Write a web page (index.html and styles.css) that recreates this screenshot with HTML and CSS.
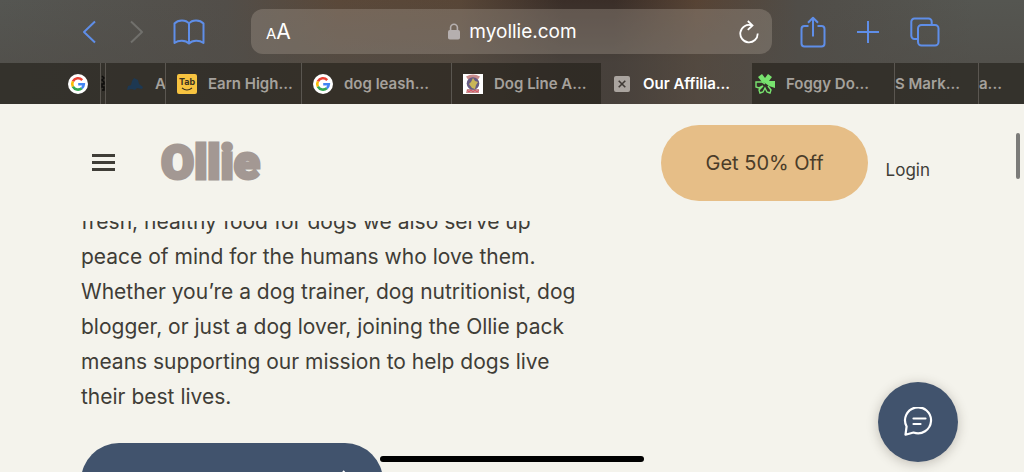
FILE: index.html
```html
<!DOCTYPE html>
<html lang="en">
<head>
<meta charset="utf-8">
<meta name="viewport" content="width=device-width, initial-scale=1">
<title>myollie.com</title>
<link rel="stylesheet" href="styles.css">
</head>
<body>
<svg class="defs" width="0" height="0" aria-hidden="true">
  <symbol id="google" viewBox="0 0 20 20">
    <circle cx="10" cy="10" r="10" fill="#fff"/>
    <g fill="none" stroke-width="2.6">
      <path d="M14.2 6.1A5.8 5.8 0 0 0 4.9 7.3" stroke="#ea4335"/>
      <path d="M4.9 7.3a5.8 5.8 0 0 0 0 5.4" stroke="#fbbc05"/>
      <path d="M4.9 12.7a5.8 5.8 0 0 0 8.9 1.5" stroke="#34a853"/>
      <path d="M13.8 14.2a5.6 5.6 0 0 0 2-4H10.2" stroke="#4285f4"/>
    </g>
  </symbol>
</svg>

<div class="browser">
  <div class="toolbar">
    <div class="tools tools-left">
      <button class="tool" aria-label="Back"><svg width="14" height="24" viewBox="0 0 14 24"><path d="M13 1.500 2 12l11 10.500"/></svg></button>
      <button class="tool tool-off" aria-label="Forward"><svg width="14" height="24" viewBox="0 0 14 24"><path d="m1 1.500 11 10.500L1 22.500"/></svg></button>
      <button class="tool" aria-label="Bookmarks"><svg width="32" height="26" viewBox="0 0 32 26"><path d="M16 4.500C13 .5 5 .5 1.500 4.500V24c4-3 11-3 14.500.5 3.500-3.500 10.500-3.500 14.500-.5V4.500C27 .5 19 .5 16 4.500v20"/></svg></button>
    </div>
    <div class="address">
      <button class="text-size" aria-label="Text size"><span class="small-a">A</span>A</button>
      <div class="site">
        <svg width="12" height="17" viewBox="0 0 12 17"><rect y="7" width="12" height="9.500" rx="1.800" fill="#b5afaf"/><path d="M2.600 8V4.600a3.400 3.400 0 0 1 6.800 0V8" fill="none" stroke="#b5afaf" stroke-width="1.600"/></svg>
        <span>myollie.com</span>
      </div>
      <button class="reload" aria-label="Reload"><svg width="20" height="24" viewBox="0 0 20 24"><path d="M12.500 5.300A8.700 8.700 0 1 0 18.700 13.500M8.800 1l4.700 4.400-4.700 4.500"/></svg></button>
    </div>
    <div class="tools tools-right">
      <button class="tool" aria-label="Share"><svg width="26" height="32" viewBox="0 0 26 32"><path d="M8.500 10H4.500A3 3 0 0 0 1.500 13v14.500a3 3 0 0 0 3 3h17a3 3 0 0 0 3-3V13a3 3 0 0 0-3-3h-4M13 20.500V2M8 6.800l5-5 5 5"/></svg></button>
      <button class="tool" aria-label="New tab"><svg width="22" height="22" viewBox="0 0 22 22"><path d="M11 0v22M0 11h22"/></svg></button>
      <button class="tool" aria-label="Tabs"><svg width="30" height="30" viewBox="0 0 30 30"><rect x="8" y="8" width="20.500" height="20.500" rx="3.500"/><path d="M8 22H4.500a3.200 3.200 0 0 1-3.200-3.200v-14A3.200 3.200 0 0 1 4.500 1.500h14a3.200 3.200 0 0 1 3.200 3.200V8"/></svg></button>
    </div>
  </div>

  <nav class="tabs" aria-label="Open tabs">
    <button class="tab tab-first" aria-label="Google"><svg class="favicon"><use href="#google"/></svg></button>
    <button class="tab tab-sliver" aria-label="Tab"><svg width="4" height="17" viewBox="0 0 4 17"><path d="M1 1l2 2-2 2 2 2v2H1v3h2v3H1" fill="none" stroke="#0c0b0a" stroke-width="1.500"/></svg></button>
    <button class="tab tab-cut"><svg width="18" height="16" viewBox="0 0 18 16"><path d="M8 2l4 2 1 4 4 3-1 2-5-1-2 2-3-1-5 1 1-4 3-1 1-4z" fill="#1d3852"/></svg><span>A</span></button>
    <button class="tab"><svg class="favicon favicon-tab" viewBox="0 0 20 20"><rect width="20" height="20" rx="2" fill="#f7c340"/><text x="10" y="11">Tab</text><path d="M5 14q5 4 10 0" fill="none" stroke="#3b3220" stroke-width="1.200"/></svg><span>Earn High...</span></button>
    <button class="tab"><svg class="favicon"><use href="#google"/></svg><span>dog leash...</span></button>
    <button class="tab"><svg class="favicon" viewBox="0 0 20 20"><rect width="20" height="20" fill="#fff"/><path d="M3 2.500q7-4 14 0l-2 3H5zM4 15h12v4H3z" fill="#c98c8c"/><circle cx="10" cy="9.500" r="6.300" fill="#665b82"/><path d="m10 4 2 3 3 1-2 3-1 4-3-1-3-4 2-2z" fill="#c9b657"/><path d="M4 16l2 2 2-2 2 2 2-2 2 2 2-2" fill="none" stroke="#d95768"/></svg><span>Dog Line A...</span></button>
    <button class="tab tab-active" aria-current="page"><svg width="16" height="16" viewBox="0 0 16 16"><rect width="16" height="16" rx="2" fill="#aaa49f"/><path d="m4.700 4.700 6.600 6.600M11.300 4.700l-6.600 6.600" stroke="#403a36" stroke-width="1.600"/></svg><span>Our Affilia...</span></button>
    <button class="tab tab-near"><svg class="favicon" viewBox="0 0 20 20"><path d="M3 3l4-3 3 4 3-4 4 3-3 4h6v7l-6-2-4-3-3-1z" fill="#78e36f"/><path d="M10 10 7 8H1v5l3 1 4-2-4 4 1 3 3-1 2-4 2 4 3 1 1-3-3-4" fill="none" stroke="#78e36f" stroke-width="1.400"/></svg><span>Foggy Do...</span></button>
    <button class="tab tab-flush"><span>S Mark...</span></button>
    <button class="tab tab-end"><span>a...</span></button>
  </nav>
</div>

<div class="page">
  <header class="site-header">
    <button class="menu" aria-label="Menu"><span></span><span></span><span></span></button>
    <a class="logo" href="#">Ollie</a>
    <a class="offer" href="#">Get 50% Off</a>
    <a class="login" href="#">Login</a>
  </header>
  <main class="content">
    <p class="intro">fresh, healthy food for dogs we also serve up<br>peace of mind for the humans who love them.<br>Whether you’re a dog trainer, dog nutritionist, dog<br>blogger, or just a dog lover, joining the Ollie pack<br>means supporting our mission to help dogs live<br>their best lives.</p>
    <a class="cta" href="#" aria-label="Next"><svg width="24" height="24" viewBox="0 0 24 24"><path d="m12 2 9 10-9 10M21 12H2"/></svg></a>
  </main>
</div>

<div class="scroll-mark"></div>
<button class="chat" aria-label="Chat"><svg width="30" height="30" viewBox="0 0 30 30"><path d="M3.600 19.500A13 13 0 1 1 10.500 25.500L2.500 27.700z"/><path d="M10.500 11.500h12M10.500 17h7" stroke-linecap="round"/></svg></button>
<div class="home-bar"></div>
</body>
</html>
```
FILE: styles.css
```css
* { box-sizing: border-box; }

body {
  display: flex;
  flex-direction: column;
  height: 100vh;
  margin: 0;
  overflow: hidden;
  background: #f4f3ec;
  color: #3f3d37;
  font-family: Inter, "Liberation Sans", sans-serif;
}

button {
  margin: 0;
  padding: 0;
  border: 0;
  background: none;
  color: inherit;
  font: inherit;
}

a { color: inherit; text-decoration: none; }
svg { flex: none; display: block; }
.defs { position: absolute; }

.browser {
  flex: none;
  background:
    linear-gradient(transparent, rgba(80, 77, 72, 0.6) 62px),
    linear-gradient(90deg, #555652 0%, #524e49 22%, #5a4839 33%, #584637 45%, #3a2e28 55%, #3a2e28 60%, #574334 68%, #504d48 78%, #555651 95%);
}

.toolbar {
  display: grid;
  grid-template-columns: 251fr 521fr 252fr;
  align-items: center;
  height: 63px;
}

.tools { display: flex; align-items: center; }
.tools-left { gap: 34px; padding-left: 82px; }
.tools-right { gap: 31px; padding-left: 28px; }
.tools-left .tool:last-child { margin-left: -5px; }

.tool svg { fill: none; stroke: #5f8ee8; stroke-width: 2; stroke-linejoin: round; }
.tool-off svg { stroke: #71706c; }

.address {
  display: grid;
  grid-template-columns: 1fr auto 1fr;
  align-items: center;
  height: 45px;
  padding: 0 13px 0 15px;
  border-radius: 12px;
  background: rgba(165, 155, 145, 0.36);
  color: #fff;
  font-size: 19px;
}

.text-size { justify-self: start; font-size: 21px; }
.small-a { font-size: 15px; }
.site { display: flex; align-items: center; gap: 9px; }
.reload { justify-self: end; }
.reload svg { fill: none; stroke: #fff; stroke-width: 1.8; }

.tabs {
  display: grid;
  grid-template-columns: 100fr 5fr 60fr 136fr 150fr 150fr 151fr 142fr 84fr 46fr;
  height: 41px;
}

.tab {
  display: flex;
  align-items: center;
  gap: 11px;
  min-width: 0;
  padding-left: 11px;
  overflow: hidden;
  border-left: 1px solid #5a5650;
  background: rgba(34, 30, 24, 0.6);
  color: #a5a19c;
  font-size: 15px;
  font-weight: 600;
  white-space: nowrap;
}

.favicon { width: 20px; height: 20px; }
.favicon-tab text { fill: #3b3220; font-size: 9px; font-weight: 700; text-anchor: middle; }
.tab-first { justify-content: flex-end; padding-right: 12px; border: 0; }
.tab-sliver { padding: 0; }
.tab-cut { padding-left: 20px; }
.tab-active { padding-left: 13px; gap: 13px; border: 0; background: none; color: #fff; }
.tab-near { padding-left: 3px; border: 0; }
.tab-flush { padding: 0; }
.tab-end { padding: 0; }

.page {
  flex: 1;
  min-height: 0;
  overflow: hidden;
}

.site-header {
  display: flex;
  align-items: center;
  height: 117px;
  padding: 0 94px 0 92px;
}

.menu { display: grid; gap: 4px; width: 23px; }
.menu span { height: 3px; background: #3f3d37; }

.logo {
  margin-left: 46px;
  color: #a39893;
  font: 900 48px/60px Roboto, sans-serif;
  -webkit-text-stroke: 3px #a39893;
}

.offer {
  margin-left: auto;
  padding: 24px 44px;
  border-radius: 38px;
  background: #e6be87;
  color: #4a3c29;
  font-size: 20px;
  line-height: 28px;
}

.login { margin: 14px 0 0 18px; font-size: 17px; line-height: 24px; }

.content { overflow: hidden; padding: 0 81px; }

.intro {
  margin: -17px 0 29px;
  font-size: 21px;
  line-height: 35px;
}

.cta {
  display: flex;
  align-items: center;
  justify-content: flex-end;
  width: 302px;
  height: 76px;
  padding-right: 28px;
  border-radius: 38px;
  background: #41536d;
}

.cta svg { fill: none; stroke: #fff; stroke-width: 2; }

.scroll-mark {
  position: fixed;
  top: 133px;
  right: 4px;
  width: 4px;
  height: 46px;
  border-radius: 2px;
  background: #7b7b79;
}

.chat {
  position: fixed;
  right: 66px;
  bottom: 10px;
  display: grid;
  place-items: center;
  width: 80px;
  height: 80px;
  border-radius: 50%;
  background: #41536d;
  box-shadow: 0 2px 12px rgba(60, 50, 40, 0.28);
}

.chat svg { fill: none; stroke: #fff; stroke-width: 2.2; stroke-linejoin: round; }

.home-bar {
  position: fixed;
  bottom: 10px;
  left: 50%;
  width: 264px;
  height: 6px;
  margin-left: -132px;
  border-radius: 3px;
  background: #000;
}
```
